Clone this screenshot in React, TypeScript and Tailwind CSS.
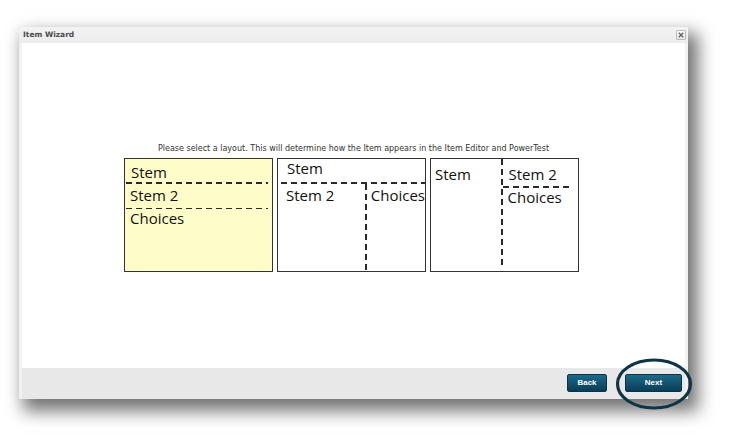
import React from "react";

function HDash() {
  return <div className="w-full h-[1.5px] bg-[linear-gradient(to_right,#2a2a2a_6px,transparent_6px)] bg-[length:10px_1.5px] bg-repeat-x" />;
}

function VDash() {
  return <div className="w-[1.5px] self-stretch bg-[linear-gradient(to_bottom,#2a2a2a_6px,transparent_6px)] bg-[length:1.5px_10px] bg-repeat-y" />;
}

const cardText = "text-[15px] leading-[18px] text-[#111] [font-family:'Open_Sans','Lato',sans-serif]";

export default function App() {
  return (
    <div className="w-[735px] h-[446px] bg-white overflow-hidden [font-family:'DejaVu_Sans',sans-serif]">
      <div className="ml-[19px] mt-[27px] w-[669px] h-[372px] flex flex-col bg-[#f1f1f1] shadow-[7px_9px_16px_3px_rgba(0,0,0,0.55)]">
        {/* title bar */}
        <div className="h-[16px] flex items-center justify-between pl-[4px] pr-[2px] bg-gradient-to-b from-[#f3f3f3] to-[#ececec]">
          <span className="text-[7.5px] font-bold text-[#4a4a4a]">Item Wizard</span>
          <div className="w-[10px] h-[10px] border border-[#bdbdbd] rounded-[1px] bg-gradient-to-b from-white to-[#e4e4e4] flex items-center justify-center">
            <svg width="6" height="6" viewBox="0 0 6 6">
              <path d="M0.8 0.8 L5.2 5.2 M5.2 0.8 L0.8 5.2" stroke="#666" strokeWidth="1.4" />
            </svg>
          </div>
        </div>
        {/* content */}
        <div className="flex-1 mx-[3px] bg-white flex flex-col items-center pt-[101px]">
          <div className="text-[8px] leading-[10px] text-[#333] whitespace-nowrap">
            Please select a layout. This will determine how the Item appears in the Item Editor and PowerTest
          </div>
          <div className="mt-[4px] flex gap-[4px] -ml-[4px]">
            {/* card 1 */}
            <div className="w-[149px] h-[114px] border-[1.5px] border-[#333] bg-[#fefdc9] flex flex-col">
              <div className={`${cardText} pl-[6px] pt-[4px] h-[23px]`}>Stem</div>
              <div className="pl-[1px] pr-[4px]"><HDash /></div>
              <div className={`${cardText} pl-[5px] pt-[2px] h-[24px]`}>Stem 2</div>
              <div className="pl-[1px] pr-[4px]"><HDash /></div>
              <div className={`${cardText} pl-[5px]`}>Choices</div>
            </div>
            {/* card 2 */}
            <div className="w-[149px] h-[114px] border-[1.5px] border-[#333] bg-white flex flex-col">
              <div className={`${cardText} pl-[9px] pt-0 h-[23px]`}>Stem</div>
              <div className="pl-[3px]"><HDash /></div>
              <div className="flex-1 flex">
                <div className={`${cardText} w-[90px] pl-[8px] pt-[2px]`}>Stem 2</div>
                <VDash />
                <div className={`${cardText} pl-[4px] pt-[2px]`}>Choices</div>
              </div>
            </div>
            {/* card 3 */}
            <div className="w-[149px] h-[114px] border-[1.5px] border-[#333] bg-white flex">
              <div className={`${cardText} w-[70px] pl-[4px] pt-[6px]`}>Stem</div>
              <div className="flex pb-[6px]"><VDash /></div>
              <div className="flex-1 flex flex-col">
                <div className={`${cardText} pl-[6px] pt-[6px] h-[27px]`}>Stem 2</div>
                <div className="pr-[6px]"><HDash /></div>
                <div className={`${cardText} pl-[5px]`}>Choices</div>
              </div>
            </div>
          </div>
        </div>
        {/* footer */}
        <div className="h-[31px] mx-[3px] bg-[#e8e8e8] flex items-center justify-end gap-[18px] pr-[3px] pb-[2px] relative">
          <button className="w-[40px] h-[18px] rounded-[2px] border border-[#0a3346] bg-gradient-to-b from-[#1d6a8a] to-[#0a3d56] text-white text-[8px] font-bold [font-family:'Liberation_Sans',sans-serif]">
            Back
          </button>
          <button className="w-[57px] h-[18px] rounded-[2px] border border-[#0a3346] bg-gradient-to-b from-[#1d6a8a] to-[#0a3d56] text-white text-[8px] font-bold [font-family:'Liberation_Sans',sans-serif]">
            Next
          </button>
          <svg className="absolute left-[593px] top-[-10px] pointer-events-none" width="78" height="54" viewBox="0 0 78 54">
            <ellipse cx="39" cy="26" rx="36.5" ry="24" fill="none" stroke="#0f3448" strokeWidth="3.2" />
          </svg>
        </div>
      </div>
    </div>
  );
}
